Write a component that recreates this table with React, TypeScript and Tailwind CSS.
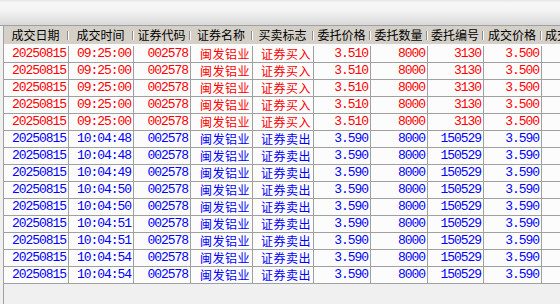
const widths = [
  "w-[65px]",
  "w-[65px]",
  "w-[57px]",
  "w-[62px]",
  "w-[61px]",
  "w-[57px]",
  "w-[57px]",
  "w-[56px]",
  "w-[58px]",
  "w-[56px]",
];

const headers = [
  "成交日期",
  "成交时间",
  "证券代码",
  "证券名称",
  "买卖标志",
  "委托价格",
  "委托数量",
  "委托编号",
  "成交价格",
  "成交金额",
];

// which columns hold chinese text (different spacing)
const cjkCols = [3, 4];

type Trade = string[];

const buy = (): Trade => [
  "20250815",
  "09:25:00",
  "002578",
  "闽发铝业",
  "证券买入",
  "3.510",
  "8000",
  "3130",
  "3.500",
  "",
];

const sell = (time: string): Trade => [
  "20250815",
  time,
  "002578",
  "闽发铝业",
  "证券卖出",
  "3.590",
  "8000",
  "150529",
  "3.590",
  "",
];

const rows: { side: "buy" | "sell"; cells: Trade }[] = [
  { side: "buy", cells: buy() },
  { side: "buy", cells: buy() },
  { side: "buy", cells: buy() },
  { side: "buy", cells: buy() },
  { side: "buy", cells: buy() },
  { side: "sell", cells: sell("10:04:48") },
  { side: "sell", cells: sell("10:04:48") },
  { side: "sell", cells: sell("10:04:49") },
  { side: "sell", cells: sell("10:04:50") },
  { side: "sell", cells: sell("10:04:50") },
  { side: "sell", cells: sell("10:04:51") },
  { side: "sell", cells: sell("10:04:51") },
  { side: "sell", cells: sell("10:04:54") },
  { side: "sell", cells: sell("10:04:54") },
];

export default function App() {
  return (
    <div className="w-[560px] h-[304px] overflow-hidden bg-[#f0f0f0] flex flex-col font-['Noto_Sans_CJK_SC',sans-serif]">
      {/* toolbar strip */}
      <div className="h-[26px] shrink-0 border-b border-[#a0a0a0] bg-[linear-gradient(to_bottom,#e6e6e6_0px,#f7f7f7_3px,#f3f3f3_11px,#d9d9d9_25px)]" />

      <div className="flex-1 flex pl-[3px] min-h-0">
        <div className="flex-1 flex flex-col border-l border-[#a0a0a0] overflow-hidden">
          {/* header */}
          <div className="h-[18px] shrink-0 flex bg-[#d4d0c8] text-black">
            {headers.map((h, i) => (
              <div key={i} className={`${widths[i]} shrink-0 flex items-center`}>
                <span className="flex-1 text-center text-[12px] leading-[14px] whitespace-nowrap">
                  {h}
                </span>
                <span className="w-[2px] h-[9px] shrink-0 border-l border-[#8c8c8c] border-r border-r-white" />
              </div>
            ))}
          </div>

          {/* rows */}
          <div className="flex flex-col">
            {rows.map((r, ri) => (
              <div
                key={ri}
                className={`flex border-b border-[#a0a0a0] bg-[#fcfcfc] ${
                  ri === 0 ? "h-[19px] pt-[2px]" : "h-[17px]"
                } ${r.side === "buy" ? "text-[#ff0000]" : "text-[#0000ff]"}`}
              >
                {r.cells.map((c, ci) => (
                  <div
                    key={ci}
                    className={`${widths[ci]} shrink-0 flex items-center justify-end pr-[2px] border-r border-[#a0a0a0] whitespace-nowrap leading-[14px] ${
                      cjkCols.includes(ci)
                        ? "font-['Noto_Sans_CJK_SC',sans-serif] text-[12px] tracking-[0.5px]"
                        : "font-['Liberation_Mono',monospace] text-[13px] tracking-[-1.05px]"
                    }`}
                  >
                    {c}
                  </div>
                ))}
              </div>
            ))}
          </div>
        </div>
      </div>
    </div>
  );
}
